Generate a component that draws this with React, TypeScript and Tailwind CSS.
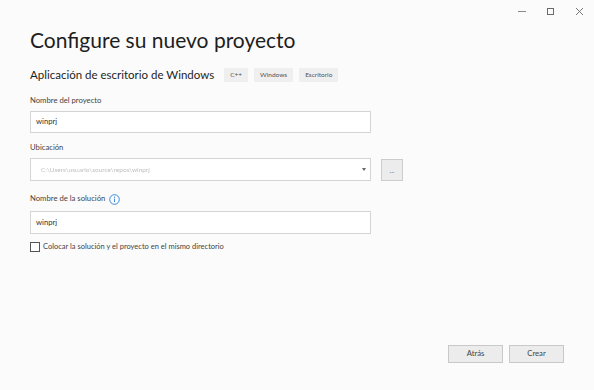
import React from "react";

export default function App() {
  const font = { fontFamily: 'Lato, "Noto Sans", sans-serif' };
  return (
    <div className="w-[594px] h-[390px] bg-[#fbfbfb] text-[#1b1b1b] relative overflow-hidden" style={font}>
      {/* window controls */}
      <div className="absolute top-0 right-0 flex items-center h-[22px]">
        <div className="w-[29px] h-[22px] flex items-center justify-center">
          <div className="w-[8px] h-px bg-[#8a8a8a]" />
        </div>
        <div className="w-[29px] h-[22px] flex items-center justify-center">
          <div className="w-[7px] h-[7px] border border-[#6a6a6a]" />
        </div>
        <div className="w-[29px] h-[22px] flex items-center justify-center">
          <svg width="9" height="9" viewBox="0 0 9 9">
            <path d="M1 1L8 8M8 1L1 8" stroke="#6a6a6a" strokeWidth="0.9" />
          </svg>
        </div>
      </div>

      <div className="pl-[30px] pt-[24px] flex flex-col">
        <h1 className="text-[21px] h-[32px] leading-[32px] font-normal text-[#1e1e1e]">Configure su nuevo proyecto</h1>

        <div className="flex items-center mt-[10px] h-[18px]">
          <span className="text-[11.5px] text-[#1e1e1e]">Aplicación de escritorio de Windows</span>
          <span className="ml-[10px] h-[14px] px-[6px] bg-[#efefef] text-[6.5px] text-[#555] flex items-center">C++</span>
          <span className="ml-[6px] h-[14px] px-[6px] bg-[#efefef] text-[6.5px] text-[#555] flex items-center">Windows</span>
          <span className="ml-[6px] h-[14px] px-[6px] bg-[#efefef] text-[6.5px] text-[#555] flex items-center">Escritorio</span>
        </div>

        <div className="mt-[10px] h-[12px] text-[7.7px] leading-[12px] text-[#444]">Nombre del proyecto</div>
        <div className="mt-[5px] w-[341px] h-[22px] bg-white border border-[#d4d4d4] flex items-center pl-[5px] text-[7.7px] text-[#333]">winprj</div>

        <div className="mt-[8px] h-[12px] text-[7.7px] leading-[12px] text-[#444]">Ubicación</div>
        <div className="mt-[5px] flex items-center">
          <div className="w-[341px] h-[23px] bg-white border border-[#d4d4d4] flex items-center pl-[10px] pr-[4px]">
            <span className="flex-1 text-[6.5px] text-[#c0c0c0] blur-[0.4px]">C:\Users\usuario\source\repos\winprj</span>
            <svg width="4" height="3" viewBox="0 0 4 3"><path d="M0 0H4L2 3Z" fill="#666" /></svg>
          </div>
          <div className="ml-[10px] w-[22px] h-[22px] bg-[#ececec] border border-[#cdcdcd] flex items-center justify-center text-[7px] text-[#777] leading-none pt-[2px]">...</div>
        </div>

        <div className="mt-[12px] flex items-center h-[12px]">
          <span className="text-[7.7px] text-[#444]">Nombre de la solución</span>
          <svg className="ml-[4px]" width="11" height="11" viewBox="0 0 11 11">
            <circle cx="5.5" cy="5.5" r="4.8" fill="none" stroke="#2a7fd4" strokeWidth="0.9" />
            <circle cx="5.5" cy="3.2" r="0.6" fill="#2a7fd4" />
            <path d="M5.5 4.6V8" stroke="#2a7fd4" strokeWidth="0.9" />
          </svg>
        </div>
        <div className="mt-[6px] w-[341px] h-[23px] bg-white border border-[#d4d4d4] flex items-center pl-[5px] text-[7.7px] text-[#333]">winprj</div>

        <div className="mt-[7px] flex items-center">
          <div className="w-[10px] h-[10px] border border-[#555] bg-white" />
          <span className="ml-[3px] text-[7.5px] text-[#444]">Colocar la solución y el proyecto en el mismo directorio</span>
        </div>
      </div>

      <div className="absolute right-[30px] bottom-[27px] flex gap-[6px]">
        <div className="w-[55px] h-[18px] bg-[#ececec] border border-[#c8c8c8] flex items-center justify-center text-[7.7px] text-[#444]">Atrás</div>
        <div className="w-[55px] h-[18px] bg-[#ececec] border border-[#c8c8c8] flex items-center justify-center text-[7.7px] text-[#444]">Crear</div>
      </div>
    </div>
  );
}
